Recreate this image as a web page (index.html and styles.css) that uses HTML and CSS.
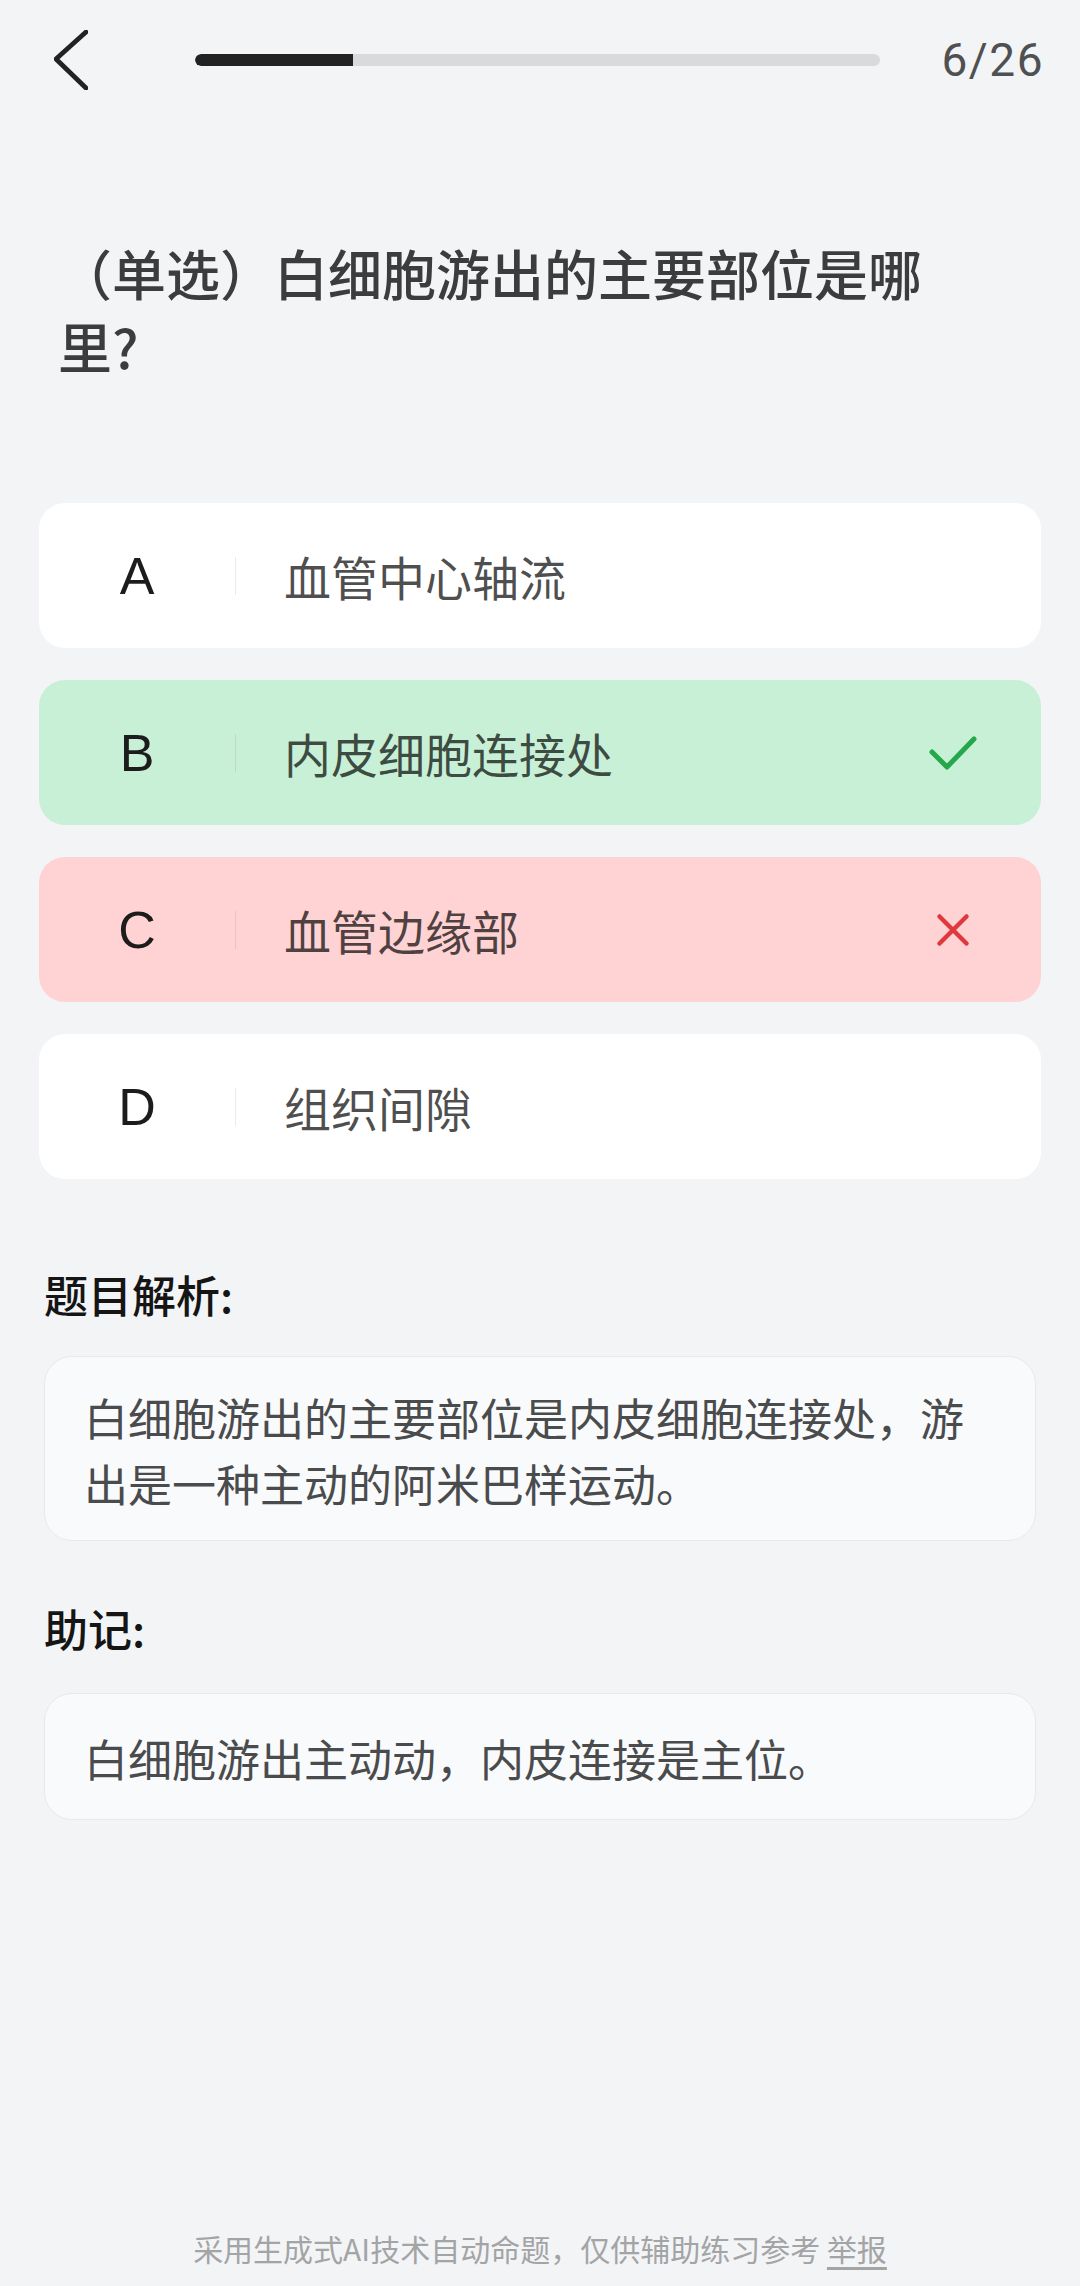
FILE: index.html
```html
<!DOCTYPE html>
<html lang="zh-CN">
<head>
<meta charset="utf-8">
<title>题目</title>
<link rel="stylesheet" href="styles.css">
</head>
<body>
<div class="page">
  <header class="topbar">
    <svg class="back" width="34" height="60" viewBox="0 0 34 60"><polyline points="32,2 2,29 32,58" fill="none" stroke="#222" stroke-width="4.8" stroke-linecap="round" stroke-linejoin="round"/></svg>
    <div class="track"><div class="fill" style="width:23.1%"></div></div>
    <div class="count">6/26</div>
  </header>

  <main class="main">
    <h1 class="question">（单选）白细胞游出的主要部位是哪<br>里?</h1>

    <div class="options">
      <div class="option">
        <span class="letter">A</span><span class="sep"></span><span class="otext">血管中心轴流</span>
      </div>
      <div class="option correct">
        <span class="letter">B</span><span class="sep"></span><span class="otext">内皮细胞连接处</span>
        <span class="mark"><svg width="50" height="36" viewBox="0 0 50 36"><polyline points="4,17 19,32 46,4" fill="none" stroke="#25a84b" stroke-width="5" stroke-linecap="round" stroke-linejoin="round"/></svg></span>
      </div>
      <div class="option wrong">
        <span class="letter">C</span><span class="sep"></span><span class="otext">血管边缘部</span>
        <span class="mark"><svg width="36" height="36" viewBox="0 0 36 36"><path d="M4.5 4.5 L31.5 31.5 M31.5 4.5 L4.5 31.5" fill="none" stroke="#e0393d" stroke-width="4.5" stroke-linecap="round"/></svg></span>
      </div>
      <div class="option">
        <span class="letter">D</span><span class="sep"></span><span class="otext">组织间隙</span>
      </div>
    </div>

    <h2 class="section-title first">题目解析:</h2>
    <div class="note note-explain">白细胞游出的主要部位是内皮细胞连接处，游出是一种主动的阿米巴样运动。</div>

    <h2 class="section-title">助记:</h2>
    <div class="note note-memo">白细胞游出主动动，内皮连接是主位。</div>
  </main>

  <footer class="footer">采用生成式AI技术自动命题，仅供辅助练习参考 <span class="report">举报</span></footer>
</div>
</body>
</html>
```

FILE: styles.css
```css
html, body {
  margin: 0;
  padding: 0;
  background: #f3f4f6;
}

body {
  font-family: "Noto Sans CJK SC", "Noto Sans", sans-serif;
  color: #333;
}

.page {
  min-height: 2286px;
  display: flex;
  flex-direction: column;
}

.topbar {
  height: 120px;
  display: flex;
  align-items: center;
  padding: 0 36px 0 54px;
}

.back {
  display: block;
  flex: none;
}

.track {
  flex: 1;
  height: 12px;
  margin-left: 107px;
  border-radius: 6px;
  background: #d9dadb;
  overflow: hidden;
}

.fill {
  height: 100%;
  background: #222222;
  border-radius: 6px 0 0 6px;
}

.count {
  width: 104px;
  margin-left: 60px;
  text-align: right;
  font-family: Roboto, "Liberation Sans", sans-serif;
  font-size: 46px;
  line-height: 60px;
  color: #4f5052;
  letter-spacing: 1.5px;
}

.main {
  padding: 0 39px;
}

.question {
  margin: 116px 0 0 0;
  padding-left: 19px;
  font-size: 54px;
  line-height: 73px;
  font-weight: 500;
  color: #3b3c3e;
}

.options {
  margin-top: 121px;
  display: flex;
  flex-direction: column;
  gap: 32px;
}

.option {
  height: 145px;
  display: flex;
  align-items: center;
  background: #ffffff;
  border-radius: 26px;
}

.option.correct {
  background: #c7f0d6;
}

.option.wrong {
  background: #ffd3d3;
}

.letter {
  width: 196px;
  text-align: center;
  font-family: "Liberation Sans", Arial, sans-serif;
  font-size: 52px;
  color: #1c1c1c;
  flex: none;
}

.sep {
  width: 1px;
  height: 38px;
  background: rgba(0, 0, 0, 0.08);
  flex: none;
}

.otext {
  margin-left: 48px;
  font-size: 47px;
  color: rgba(0, 0, 0, 0.7);
}

.mark {
  margin-left: auto;
  margin-right: 63px;
  width: 50px;
  display: flex;
  justify-content: center;
  align-items: center;
}

.mark svg {
  display: block;
}

.section-title {
  margin: 57px 0 0 0;
  padding-left: 5px;
  font-size: 44px;
  line-height: 60px;
  font-weight: 500;
  color: #151515;
}

.section-title.first {
  margin-top: 85px;
}

.note {
  margin: 32px 5px 0 5px;
  background: #f9fafb;
  border: 1px solid #e8e9eb;
  border-radius: 28px;
  font-size: 44px;
  line-height: 66px;
  color: #4a4b4d;
}

.note-explain {
  padding: 27px 39px 24px 39px;
}

.note-memo {
  margin-top: 35px;
  padding: 31px 39px 28px 39px;
}

.footer {
  margin-top: auto;
  padding-bottom: 18px;
  text-align: center;
  font-size: 30px;
  line-height: 40px;
  color: #a3a4a6;
}

.report {
  text-decoration: underline;
  text-underline-offset: 6px;
}
```
